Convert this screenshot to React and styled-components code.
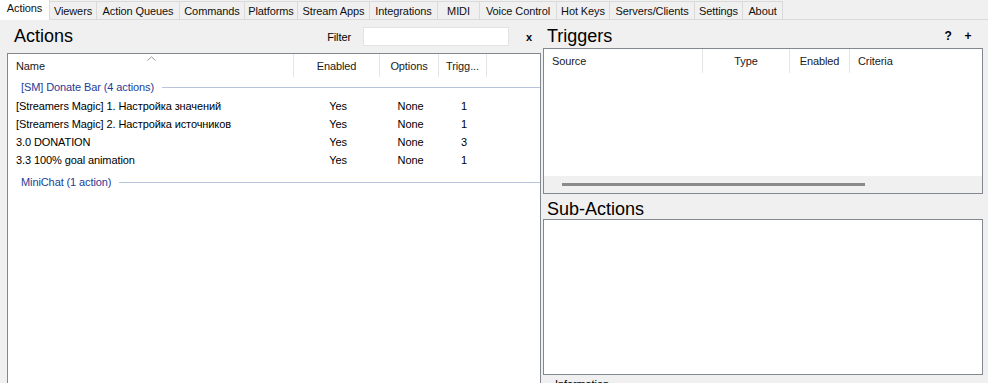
import React from 'react';
import styled, { createGlobalStyle } from 'styled-components';

const GlobalStyle = createGlobalStyle`
  html, body { margin: 0; padding: 0; height: 100%; }
  body {
    background: #f0f0f0;
    font-family: "Liberation Sans", "DejaVu Sans", sans-serif;
    font-size: 11px;
    letter-spacing: -0.1px;
    color: #000;
    overflow: hidden;
  }
  #root { height: 100%; }
`

const Page = styled.div`
  height: 100vh;
  display: flex;
  flex-direction: column;
  overflow: hidden;
`
const TabBar = styled.div`
  display: flex;
  height: 20px;
  border-bottom: 1px solid #dadada;
  box-sizing: border-box;
  flex-shrink: 0;
`
const Tab = styled.div`
  width: ${p => p.$w}px;
  box-sizing: border-box;
  display: flex;
  justify-content: center;
  align-items: center;
  padding-bottom: ${p => (p.$active ? 4 : 0)}px;
  background: ${p => (p.$active ? '#ffffff' : '#f0f0f0')};
  border-right: 1px solid #dadada;
  border-top: ${p => (p.$active ? 'none' : '1px solid #dadada')};
  margin-top: ${p => (p.$active ? 0 : 1)}px;
  margin-bottom: ${p => (p.$active ? -1 : 0)}px;
  white-space: nowrap;
  color: #111;
`
const Body = styled.div`
  flex: 1;
  display: grid;
  grid-template-columns: 541px 1fr;
  min-height: 0;
`
const Pane = styled.div`
  display: flex;
  flex-direction: column;
  min-height: 0;
  padding-left: ${p => p.$pad}px;
`
const PaneHead = styled.div`
  height: ${p => p.$h}px;
  padding-top: ${p => p.$top || 0}px;
  box-sizing: border-box;
  display: flex;
  align-items: center;
  flex-shrink: 0;
`
const Title = styled.div`
  font-size: 18px;
  letter-spacing: 0;
  padding-left: ${p => p.$pad}px;
  flex: 1;
  color: #000;
`
const FilterLabel = styled.span`
  margin-right: 12px;
`
const FilterInput = styled.input`
  width: 146px;
  height: 19px;
  box-sizing: border-box;
  border: 1px solid #e3e3e3;
  background: #fff;
  outline: none;
  margin-right: 14px;
`
const SmallBtn = styled.span`
  font-weight: bold;
  font-size: ${p => p.$size || 11}px;
  width: ${p => p.$w || 20}px;
  text-align: center;
`
const ListWrap = styled.div`
  padding-left: 7px;
  flex: 1;
  display: flex;
  min-height: 0;
`
const ListBox = styled.div`
  display: flex;
  flex-direction: column;
  background: #fff;
  border: 1px solid #828790;
  box-sizing: border-box;
  width: ${p => p.$w}px;
  height: ${p => (p.$h ? `${p.$h}px` : 'auto')};
  flex: ${p => (p.$h ? 'none' : '1')};
  margin-bottom: ${p => (p.$h ? 0 : -6)}px;
  overflow: hidden;
`
const HeaderRow = styled.div`
  display: grid;
  grid-template-columns: ${p => p.$cols};
  height: ${p => p.$h}px;
  flex-shrink: 0;
`
const HeadCell = styled.div`
  position: relative;
  display: flex;
  align-items: center;
  justify-content: ${p => (p.$center ? 'center' : 'flex-start')};
  padding-left: ${p => (p.$center ? 0 : 8)}px;
  border-right: ${p => (p.$last ? 'none' : '1px solid #e5e5e5')};
  color: #1a1a1a;
  white-space: nowrap;
`
const SortArrow = styled.svg`
  position: absolute;
  top: 2px;
  left: 50%;
  margin-left: -4px;
`
const GroupRow = styled.div`
  display: flex;
  align-items: center;
  height: 20px;
  margin-top: ${p => p.$mt || 0}px;
  padding-left: 13px;
  color: #1e3c96;
  white-space: nowrap;
  &::after {
    content: '';
    flex: 1;
    height: 1px;
    margin-left: 8px;
    background: #b8c4dc;
  }
`
const Row = styled.div`
  display: grid;
  grid-template-columns: 287px 86px 59px 48px 1fr;
  height: 18px;
  align-items: center;
`
const Cell = styled.div`
  padding-left: ${p => (p.$center ? 0 : 8)}px;
  text-align: ${p => (p.$center ? 'center' : 'left')};
  white-space: nowrap;
`
const Spacer = styled.div`
  flex: ${p => p.$fixed ? `0 0 ${p.$fixed}px` : 1};
`
const HScroll = styled.div`
  height: 17px;
  background: #f0f0f0;
  display: flex;
  align-items: center;
  flex-shrink: 0;
`
const Thumb = styled.div`
  margin-left: 18px;
  width: 303px;
  height: 3px;
  background: #8a8a8a;
`
const Caption = styled.div`
  padding: 3px 0 0 12px;
`

const tabs = [
  { label: 'Actions', w: 50, active: true },
  { label: 'Viewers', w: 47 },
  { label: 'Action Queues', w: 83 },
  { label: 'Commands', w: 65 },
  { label: 'Platforms', w: 53 },
  { label: 'Stream Apps', w: 72 },
  { label: 'Integrations', w: 68 },
  { label: 'MIDI', w: 42 },
  { label: 'Voice Control', w: 77 },
  { label: 'Hot Keys', w: 53 },
  { label: 'Servers/Clients', w: 85 },
  { label: 'Settings', w: 48 },
  { label: 'About', w: 40 },
];

const actions = [
  { name: '[Streamers Magic] 1. Настройка значений', trig: 1 },
  { name: '[Streamers Magic] 2. Настройка источников', trig: 1 },
  { name: '3.0 DONATION', trig: 3 },
  { name: '3.3 100% goal animation', trig: 1 },
];

export default function App() {
  return (
    <Page>
      <GlobalStyle />
      <TabBar>
        {tabs.map(t => (
          <Tab key={t.label} $w={t.w} $active={t.active}>{t.label}</Tab>
        ))}
      </TabBar>
      <Body>
        <Pane $pad={0}>
          <PaneHead $h={33}>
            <Title $pad={14}>Actions</Title>
            <FilterLabel>Filter</FilterLabel>
            <FilterInput />
            <SmallBtn $w={12}>x</SmallBtn>
            <Spacer $fixed={6} />
          </PaneHead>
          <ListWrap>
            <ListBox $w={531}>
              <HeaderRow $h={23} $cols="286px 86px 59px 48px 1fr">
                <HeadCell>
                  Name
                  <SortArrow width="9" height="5" viewBox="0 0 9 5">
                    <path d="M0.5 4.5 L4.5 0.8 L8.5 4.5" fill="none" stroke="#9a9a9a" strokeWidth="1" />
                  </SortArrow>
                </HeadCell>
                <HeadCell $center>Enabled</HeadCell>
                <HeadCell $center>Options</HeadCell>
                <HeadCell $center>Trigg...</HeadCell>
                <HeadCell $last />
              </HeaderRow>
              <GroupRow>[SM] Donate Bar (4 actions)</GroupRow>
              {actions.map(a => (
                <Row key={a.name}>
                  <Cell>{a.name}</Cell>
                  <Cell $center>Yes</Cell>
                  <Cell $center>None</Cell>
                  <Cell $center>{a.trig}</Cell>
                  <Cell />
                </Row>
              ))}
              <GroupRow $mt={3}>MiniChat (1 action)</GroupRow>
            </ListBox>
          </ListWrap>
        </Pane>
        <Pane $pad={2}>
          <PaneHead $h={28} $top={4}>
            <Title $pad={4}>Triggers</Title>
            <SmallBtn $size={12} $w={14}>?</SmallBtn>
            <SmallBtn $size={12} $w={26}>+</SmallBtn>
            <Spacer $fixed={7} />
          </PaneHead>
          <ListBox $w={440} $h={146}>
            <HeaderRow $h={24} $cols="159px 87px 60px 1fr">
              <HeadCell>Source</HeadCell>
              <HeadCell $center>Type</HeadCell>
              <HeadCell $center>Enabled</HeadCell>
              <HeadCell $last>Criteria</HeadCell>
            </HeaderRow>
            <Spacer />
            <HScroll>
              <Thumb />
            </HScroll>
          </ListBox>
          <PaneHead $h={25} $top={5}>
            <Title $pad={4}>Sub-Actions</Title>
          </PaneHead>
          <ListBox $w={440} $h={156} />
          <Caption>Information</Caption>
        </Pane>
      </Body>
    </Page>
  );
}
